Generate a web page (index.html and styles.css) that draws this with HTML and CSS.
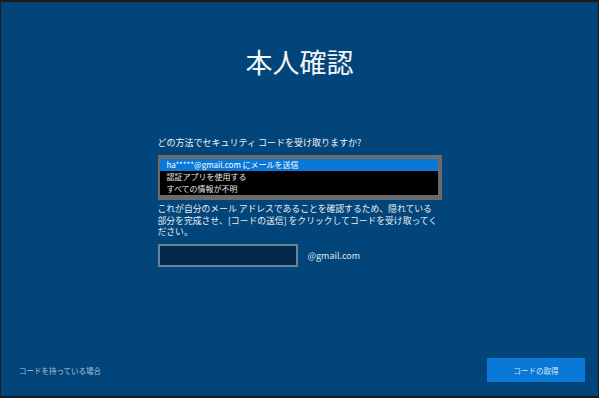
FILE: index.html
```html
<!DOCTYPE html>
<html lang="ja">
<head>
<meta charset="utf-8">
<title>本人確認</title>
<link rel="stylesheet" href="styles.css">
</head>
<body>
<div class="frame">
  <h1 class="title">本人確認</h1>
  <div class="content">
    <p class="question">どの方法でセキュリティ コードを受け取りますか?</p>
    <div class="listbox">
      <div class="option selected">ha*****@gmail.com にメールを送信</div>
      <div class="option">認証アプリを使用する</div>
      <div class="option">すべての情報が不明</div>
    </div>
    <p class="desc">これが自分のメール アドレスであることを確認するため、隠れている<br>部分を完成させ、[コードの送信] をクリックしてコードを受け取ってく<br>ださい。</p>
    <div class="email-row">
      <div class="input"></div>
      <span class="domain">@gmail.com</span>
    </div>
  </div>
  <div class="footer">
    <span class="link">コードを持っている場合</span>
    <span class="button">コードの取得</span>
  </div>
</div>
</body>
</html>
```

FILE: styles.css
```css
html, body {
  margin: 0;
  padding: 0;
}
body {
  width: 599px;
  height: 398px;
  background: #1c1c1c;
  font-family: "Noto Sans CJK JP", "Noto Sans", sans-serif;
  overflow: hidden;
}
.frame {
  margin: 2px 1px 0 1px;
  height: 394px;
  background: #02457a;
  display: flex;
  flex-direction: column;
  box-sizing: border-box;
  padding-top: 44px;
}
.title {
  margin: 0;
  text-align: center;
  font-size: 27px;
  line-height: 32px;
  font-weight: 400;
  color: #f4f6f8;
}
.content {
  width: 284px;
  margin: 59px auto 0;
}
.question {
  margin: 0;
  font-size: 9px;
  line-height: 12px;
  color: #f0f2f4;
}
.listbox {
  margin-top: 6px;
  background: #6b6b6b;
  padding: 4px 4px 5px 2px;
}
.option {
  height: 12px;
  line-height: 12px;
  font-size: 8px;
  color: #e6e6e6;
  background: #000;
  padding-left: 7px;
  white-space: nowrap;
}
.option.selected {
  background: #0a78d6;
  color: #ffffff;
}
.desc {
  margin: 3px 0 0;
  font-size: 8.8px;
  line-height: 11.5px;
  color: #eceef0;
  white-space: nowrap;
}
.email-row {
  display: flex;
  align-items: center;
  gap: 10px;
  margin-top: 6px;
}
.input {
  width: 140px;
  height: 23px;
  box-sizing: border-box;
  border: 2px solid #6c8297;
  background: #05294a;
}
.domain {
  font-size: 9px;
  color: #dfe5ea;
}
.footer {
  margin-top: auto;
  display: flex;
  justify-content: space-between;
  align-items: center;
  padding: 0 13px 14px 18px;
}
.link {
  font-size: 7.5px;
  color: #a7c2dc;
}
.button {
  width: 98px;
  height: 24px;
  background: #0a78d6;
  color: #d4e6f6;
  font-size: 7.5px;
  display: flex;
  align-items: center;
  justify-content: center;
}
```
